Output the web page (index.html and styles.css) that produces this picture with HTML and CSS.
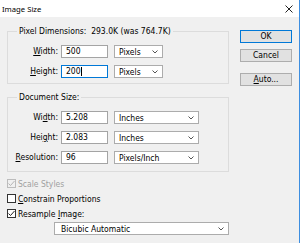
FILE: index.html
```html
<!DOCTYPE html>
<html lang="en">
<head>
  <meta charset="UTF-8">
  <title>Image Size</title>
  <link rel="stylesheet" href="styles.css">
</head>
<body>
  <div class="dialog">
    <div class="titlebar">
      <span class="title">Image Size</span>
      <svg class="close" width="8" height="8" viewBox="0 0 8 8">
        <path d="M0.5 0.5 L7.5 7.5 M7.5 0.5 L0.5 7.5" stroke="#222" stroke-width="1"/>
      </svg>
    </div>

    <div class="body">
      <div class="main">
        <fieldset class="group">
          <legend>Pixel Dimensions:&nbsp; 293.0K (was 764.7K)</legend>
          <div class="rows">
            <label><u>W</u>idth:</label>
            <div class="field">500</div>
            <div class="combo">Pixels <svg class="chev" width="6" height="4" viewBox="0 0 6 4"><path d="M0.5 0.5 L3 3 L5.5 0.5" fill="none" stroke="#555"/></svg></div>

            <label><u>H</u>eight:</label>
            <div class="field focused">200<span class="caret"></span></div>
            <div class="combo">Pixels <svg class="chev" width="6" height="4" viewBox="0 0 6 4"><path d="M0.5 0.5 L3 3 L5.5 0.5" fill="none" stroke="#555"/></svg></div>
          </div>
        </fieldset>

        <fieldset class="group doc">
          <legend>Document Size:</legend>
          <div class="rows">
            <label>Wi<u>d</u>th:</label>
            <div class="field">5.208</div>
            <div class="combo">Inches <svg class="chev" width="6" height="4" viewBox="0 0 6 4"><path d="M0.5 0.5 L3 3 L5.5 0.5" fill="none" stroke="#555"/></svg></div>

            <label>Hei<u>g</u>ht:</label>
            <div class="field">2.083</div>
            <div class="combo">Inches <svg class="chev" width="6" height="4" viewBox="0 0 6 4"><path d="M0.5 0.5 L3 3 L5.5 0.5" fill="none" stroke="#555"/></svg></div>

            <label><u>R</u>esolution:</label>
            <div class="field">96</div>
            <div class="combo">Pixels/Inch <svg class="chev" width="6" height="4" viewBox="0 0 6 4"><path d="M0.5 0.5 L3 3 L5.5 0.5" fill="none" stroke="#555"/></svg></div>
          </div>
        </fieldset>

        <div class="checks">
          <div class="check disabled">
            <span class="box"><svg width="7" height="7" viewBox="0 0 7 7"><path d="M0.5 3.5 L2.5 5.5 L6.5 1" fill="none" stroke="#b4b4b4"/></svg></span>
            Scale Styles
          </div>
          <div class="check">
            <span class="box"></span>
            <span><u>C</u>onstrain Proportions</span>
          </div>
          <div class="check">
            <span class="box"><svg width="7" height="7" viewBox="0 0 7 7"><path d="M0.5 3.5 L2.5 5.5 L6.5 1" fill="none" stroke="#222"/></svg></span>
            <span>Resample <u>I</u>mage:</span>
          </div>
          <div class="combo wide">Bicubic Automatic <svg class="chev" width="6" height="4" viewBox="0 0 6 4"><path d="M0.5 0.5 L3 3 L5.5 0.5" fill="none" stroke="#555"/></svg></div>
        </div>
      </div>

      <div class="buttons">
        <div class="btn default">OK</div>
        <div class="btn">Cancel</div>
        <div class="btn auto"><u>A</u>uto...</div>
      </div>
    </div>
  </div>
</body>
</html>
```

FILE: styles.css
```css
body {
  margin: 0;
  background: #f0f0f0;
  color: #000;
  font-family: "DejaVu Sans Condensed", "DejaVu Sans", sans-serif;
  font-size: 8.5px;
}

.dialog {
  width: 300px;
  height: 243px;
  box-sizing: border-box;
  border-right: 1px solid #3d8ee0;
  background: #f0f0f0;
  display: flex;
  flex-direction: column;
  overflow: hidden;
}

.titlebar {
  height: 17px;
  background: #fff;
  display: flex;
  align-items: center;
  justify-content: space-between;
  padding: 0 6px 0 2px;
}

.title {
  font-family: "Noto Sans", sans-serif;
  font-size: 7.7px;
  color: #000;
}

.close {
  display: block;
  margin-top: 1px;
}

.body {
  display: flex;
  align-items: flex-start;
}

.main {
  padding-left: 7px;
  width: 222px;
}

.group {
  margin: 8px 0 0;
  padding: 7px 0 5px;
  border: 1px solid #dcdcdc;
  width: 222px;
  box-sizing: border-box;
  min-width: 0;
}

.group.doc {
  margin-top: 7px;
  padding-bottom: 7px;
}

.group legend {
  margin-left: 9px;
  padding: 0 2px;
  line-height: 13px;
  height: 13px;
}

.rows {
  display: grid;
  grid-template-columns: 50px 47px 52px;
  grid-auto-rows: 13px;
  column-gap: 3px;
  row-gap: 7px;
}

.doc .rows {
  grid-template-columns: 50px 47px 88px;
}

.rows label {
  text-align: right;
  line-height: 13px;
}

.field {
  box-sizing: border-box;
  height: 13px;
  border: 1px solid #a4a4a4;
  background: #fff;
  padding: 0 4px;
  line-height: 11px;
  display: flex;
  align-items: center;
}

.field.focused {
  border-color: #0078d7;
}

.caret {
  display: inline-block;
  width: 1px;
  height: 9px;
  background: #000;
}

.combo {
  box-sizing: border-box;
  height: 13px;
  margin-left: 3px;
  border: 1px solid #acacac;
  background: #fff;
  padding: 0 4px;
  display: flex;
  align-items: center;
  justify-content: space-between;
}

.chev {
  display: block;
}

.checks {
  display: flex;
  flex-direction: column;
  padding-top: 4px;
}

.check {
  height: 15px;
  display: flex;
  align-items: center;
  gap: 2px;
}

.check .box {
  box-sizing: border-box;
  width: 9px;
  height: 9px;
  border: 1px solid #333;
  background: #fff;
  display: flex;
  align-items: center;
  justify-content: center;
}

.check.disabled {
  color: #a0a0a0;
}

.check.disabled .box {
  border-color: #bcbcbc;
  background: #f0f0f0;
}

.combo.wide {
  margin: 1px 0 0 47px;
  width: 175px;
  padding-left: 6px;
}

.buttons {
  margin-left: 11px;
  padding-top: 13px;
  width: 52px;
  display: flex;
  flex-direction: column;
}

.btn {
  box-sizing: border-box;
  height: 13px;
  border: 1px solid #adadad;
  background: #e1e1e1;
  text-align: center;
  line-height: 11px;
  margin-bottom: 6px;
}

.btn.default {
  border-color: #0078d7;
}

.btn.auto {
  margin-top: 5px;
}
```
